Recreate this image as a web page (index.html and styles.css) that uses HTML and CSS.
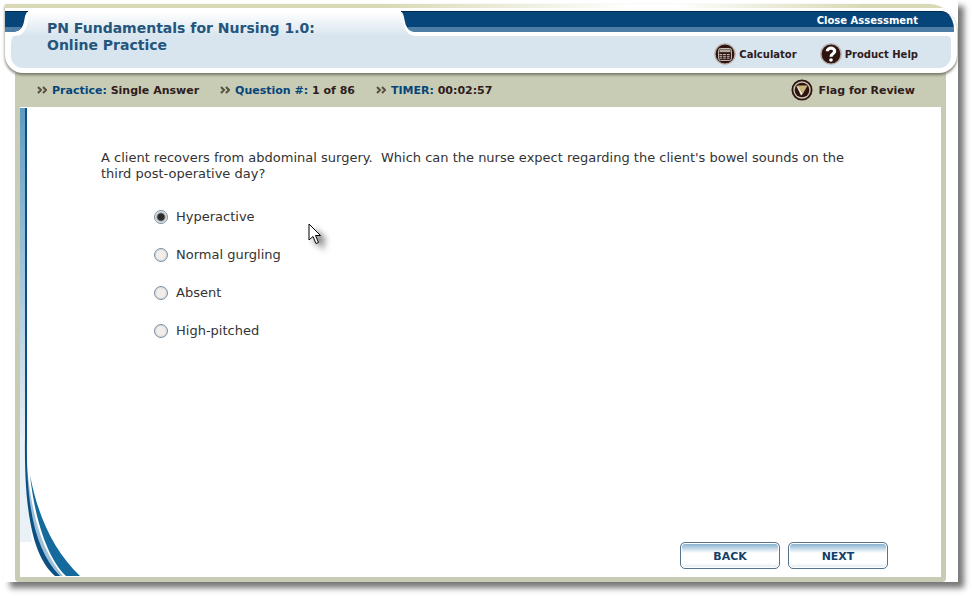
FILE: index.html
```html
<!DOCTYPE html>
<html lang="en">
<head>
  <meta charset="UTF-8">
  <meta name="viewport" content="width=device-width, initial-scale=1.0">
  <title>PN Fundamentals for Nursing 1.0</title>
  <link rel="stylesheet" href="styles.css">
</head>
<body>
  <div class="window">
    <header class="header">
      <div class="header-strip"></div>
      <div class="header-grid">
        <div class="tab">
          <svg class="tab-left" viewBox="0 0 34 40">
            <path d="M0 0H28C23 5 24 10 22 17C20 25 15 28 10 28C7 28 6 31 6 40H0z" fill="#fff"></path>
            <path d="M0 3H23C19 7 20 12 18 17C16 22 12 24 6 24H0z" fill="#06457a"></path>
            <path d="M0 19H17C14 23 11 24 6 24H0z" fill="#4e7da6"></path>
            <path d="M0 3.500H23" stroke="#022b50"></path>
          </svg>
          <h1 class="title">PN Fundamentals for Nursing 1.0:<br>Online Practice</h1>
          <svg class="tab-right" viewBox="0 0 34 40">
            <path d="M0 0C4 1 5 5 6 12C7 22 11 28 20 28H34V0z" fill="#fff"></path>
            <path d="M4 3C7 6 7 10 8 14C9 20 13 24 20 24H34V3z" fill="#06457a"></path>
            <path d="M10 19C12 23 15 24 20 24H34V19z" fill="#4e7da6"></path>
            <path d="M4 3.500H34" stroke="#022b50"></path>
          </svg>
        </div>
        <nav class="close-bar"><a href="#">Close Assessment</a></nav>
        <nav class="tools">
          <a href="#">
            <svg class="icon" viewBox="0 0 24 24">
              <circle cx="12" cy="12" r="11" fill="#2d1410" stroke="#b9aba5" stroke-width="1.5"></circle>
              <rect x="5" y="6" width="14" height="13" rx="2" fill="none" stroke="#d8cfca"></rect>
              <rect x="6" y="7" width="12" height="3" fill="#b5a9a4"></rect>
              <path d="M6 12.500h12M6 14.500h12M6 16.500h12" stroke="#d8cfca" stroke-dasharray="3 1"></path>
            </svg>
            Calculator
          </a>
          <a href="#">
            <svg class="icon" viewBox="0 0 24 24">
              <circle cx="12" cy="12" r="11" fill="#2d1410" stroke="#b9aba5" stroke-width="1.5"></circle>
              <path d="M8 9C8 4.500 16 4.500 16 9C16 12 12 11.500 12 15" fill="none" stroke="#fff" stroke-width="3.500"></path>
              <circle cx="12" cy="18.500" r="2" fill="#fff"></circle>
            </svg>
            Product Help
          </a>
        </nav>
      </div>
    </header>

    <main class="frame">
      <div class="info-bar">
        <p class="info"><svg class="chevrons" viewBox="0 0 10 8"><path d="M1 1L4 4L1 7M6 1L9 4L6 7"></path></svg><span><b>Practice:</b> Single Answer</span></p>
        <p class="info"><svg class="chevrons" viewBox="0 0 10 8"><path d="M1 1L4 4L1 7M6 1L9 4L6 7"></path></svg><span><b>Question #:</b> 1 of 86</span></p>
        <p class="info"><svg class="chevrons" viewBox="0 0 10 8"><path d="M1 1L4 4L1 7M6 1L9 4L6 7"></path></svg><span><b>TIMER:</b> 00:02:57</span></p>
        <a class="flag" href="#">
          <svg class="icon" viewBox="0 0 24 24">
            <circle cx="12" cy="12" r="10.500" fill="#c9c4b4" stroke="#2d1410" stroke-width="2"></circle>
            <circle cx="12" cy="12" r="8" fill="#2d1410"></circle>
            <path d="M6 8L11 18L13 16L8 8z" fill="#eee6d0"></path>
            <path d="M7 7H18L13 16z" fill="#c9b478"></path>
          </svg>
          Flag for Review
        </a>
      </div>

      <form class="content">
        <div class="side-strip"></div>
        <svg class="swoosh" viewBox="0 0 62 140">
          <path d="M0 0H5C5 40 8 75 12 105H0z" fill="#e9f0f6"></path>
          <path d="M7 30C12 82 24 117 43 139H38C18 121 7 85 7 30z" fill="#9dc1d8"></path>
          <path d="M5 0H7C6 68 14 112 40 139H35C12 119 4 72 5 0z" fill="#0b4f83"></path>
          <path d="M10 38C18 80 34 114 60 139H46C28 122 15 84 10 38z" fill="#146a9c"></path>
        </svg>

        <fieldset class="question">
          <legend>A client recovers from abdominal surgery.&nbsp; Which can the nurse expect regarding the client's bowel sounds on the third post-operative day?</legend>
          <div class="answers">
            <label><input type="radio" name="answer" checked>Hyperactive</label>
            <label><input type="radio" name="answer">Normal gurgling</label>
            <label><input type="radio" name="answer">Absent</label>
            <label><input type="radio" name="answer">High-pitched</label>
          </div>
        </fieldset>

        <div class="buttons">
          <button type="button">BACK</button>
          <button type="button">NEXT</button>
        </div>

        <svg class="cursor" viewBox="0 0 14 22">
          <path d="M1 1V17L5 13.500L8 20.500L10.500 19.500L7.500 12.500H12.500z" fill="#fff" stroke="#000"></path>
        </svg>
      </form>
    </main>
  </div>
</body>
</html>
```

FILE: styles.css
```css
* {
  box-sizing: border-box;
}

body {
  margin: 0;
  min-height: 100vh;
  display: flex;
  background: #fff;
  color: #2e1c20;
  font-family: "DejaVu Sans", Verdana, sans-serif;
  font-size: 11px;
}

a {
  color: inherit;
  text-decoration: none;
}

h1,
p {
  margin: 0;
}

.window {
  flex: 1;
  display: flex;
  flex-direction: column;
  margin: 0 14px 14px 4px;
  padding: 4px 1px 0;
  background: #fff;
  box-shadow: 6px 6px 6px #777;
}

/* header */

.header {
  position: relative;
  z-index: 1;
  padding-bottom: 5px;
  overflow: hidden;
  background: #fff;
  border-radius: 0 28px 18px 18px;
  box-shadow: 0 2px 3px #77776a;
}

.header-strip {
  height: 4px;
  background: linear-gradient(90deg, #d9dab5 40%, #fff 66%, #fff 70%, #d9dab5 90%);
}

.header-grid {
  display: grid;
  grid-template-columns: 412px 1fr;
  grid-template-rows: 28px 32px;
}

.tab {
  position: relative;
  grid-row: 1 / 3;
  margin-left: 6px;
  padding: 12px 36px;
  background: linear-gradient(#fff 4px, #d8e5ee 28px);
  border-bottom-left-radius: 12px;
}

.tab-left,
.tab-right {
  position: absolute;
  top: 0;
  width: 34px;
  height: 40px;
}

.tab-left {
  left: -6px;
}

.tab-right {
  right: -14px;
}

.title {
  color: #24557d;
  font-size: 14px;
  line-height: 17px;
  white-space: nowrap;
}

.close-bar {
  display: flex;
  justify-content: flex-end;
  align-items: center;
  margin: 3px 3px 4px 0;
  padding: 2px 36px 0 0;
  border-top: 1px solid #022b50;
  background: linear-gradient(#06457a 15px, #4e7da6 15px);
  border-top-right-radius: 12px 20px;
  color: #fff;
  font-size: 10px;
  line-height: 14px;
  font-weight: bold;
}

.close-bar a {
  padding-bottom: 4px;
}

.tools {
  display: flex;
  justify-content: flex-end;
  align-items: center;
  gap: 23px;
  margin-right: 6px;
  padding: 4px 33px 0 0;
  background: #d8e5ee;
  border-radius: 0 4px 12px 0;
  font-size: 10px;
  font-weight: bold;
}

.tools a {
  display: flex;
  align-items: center;
  gap: 3px;
}

.icon {
  width: 22px;
  height: 22px;
}

/* question frame */

.frame {
  flex: 1;
  display: flex;
  flex-direction: column;
  margin: 0 11px 0 10px;
  padding: 0 5px 5px 5px;
  background: #c9ccb4;
  border-radius: 0 0 4px 4px;
}

.info-bar {
  display: flex;
  align-items: center;
  gap: 21px;
  height: 34px;
  padding: 0 26px 0 17px;
  font-weight: bold;
}

.info {
  display: flex;
  align-items: center;
  gap: 5px;
}

.info b {
  color: #06457a;
}

.chevrons {
  width: 10px;
  height: 8px;
  fill: none;
  stroke: #55503f;
  stroke-width: 2;
}

.flag {
  display: flex;
  align-items: center;
  gap: 5px;
  margin-left: auto;
}

.content {
  position: relative;
  flex: 1;
  display: flex;
  flex-direction: column;
  justify-content: space-between;
  padding: 43px 53px 8px 81px;
  background: #fff;
  color: #333;
  font-size: 13px;
}

.side-strip {
  position: absolute;
  top: 1px;
  bottom: 140px;
  left: 0;
  width: 7px;
  border-right: 2px solid #0b4f83;
  background: linear-gradient(#5f9cc0, #e6eef5);
}

.swoosh {
  position: absolute;
  bottom: 0;
  left: 0;
  width: 62px;
  height: 140px;
}

.question {
  margin: 0;
  padding: 0;
  border: 0;
}

.question legend {
  padding: 0 24px 0 0;
  line-height: 16px;
}

.answers {
  display: flex;
  flex-direction: column;
  align-items: flex-start;
  gap: 22px;
  padding: 27px 0 0 53px;
}

.answers label {
  display: flex;
  align-items: center;
  gap: 8px;
  line-height: 16px;
}

.answers input {
  appearance: none;
  width: 14px;
  height: 14px;
  margin: 0;
  border: 1px solid #7d8f9f;
  border-radius: 50%;
  background: radial-gradient(#f6eee6 3px, #eee 4px, #d5dade 6px);
}

.answers input:checked {
  background: radial-gradient(#2b2b2b 3px, #dce3e8 5px);
}

.buttons {
  display: flex;
  justify-content: flex-end;
  gap: 8px;
}

.buttons button {
  width: 100px;
  height: 27px;
  padding: 1px 0 0;
  border: 1px solid #58748c;
  border-radius: 5px;
  background: linear-gradient(#7ba9cb, #fff 10px, #fff 20px, #dceaf2);
  box-shadow: inset 0 0 0 1px #fff;
  color: #123f69;
  font: bold 11px "DejaVu Sans", Verdana, sans-serif;
}

/* mouse pointer lies over the question area */

.cursor {
  position: absolute;
  top: 116px;
  left: 288px;
  width: 14px;
  height: 22px;
  overflow: visible;
  filter: drop-shadow(6px 5px 3px rgba(0, 0, 0, 0.5));
}
```
